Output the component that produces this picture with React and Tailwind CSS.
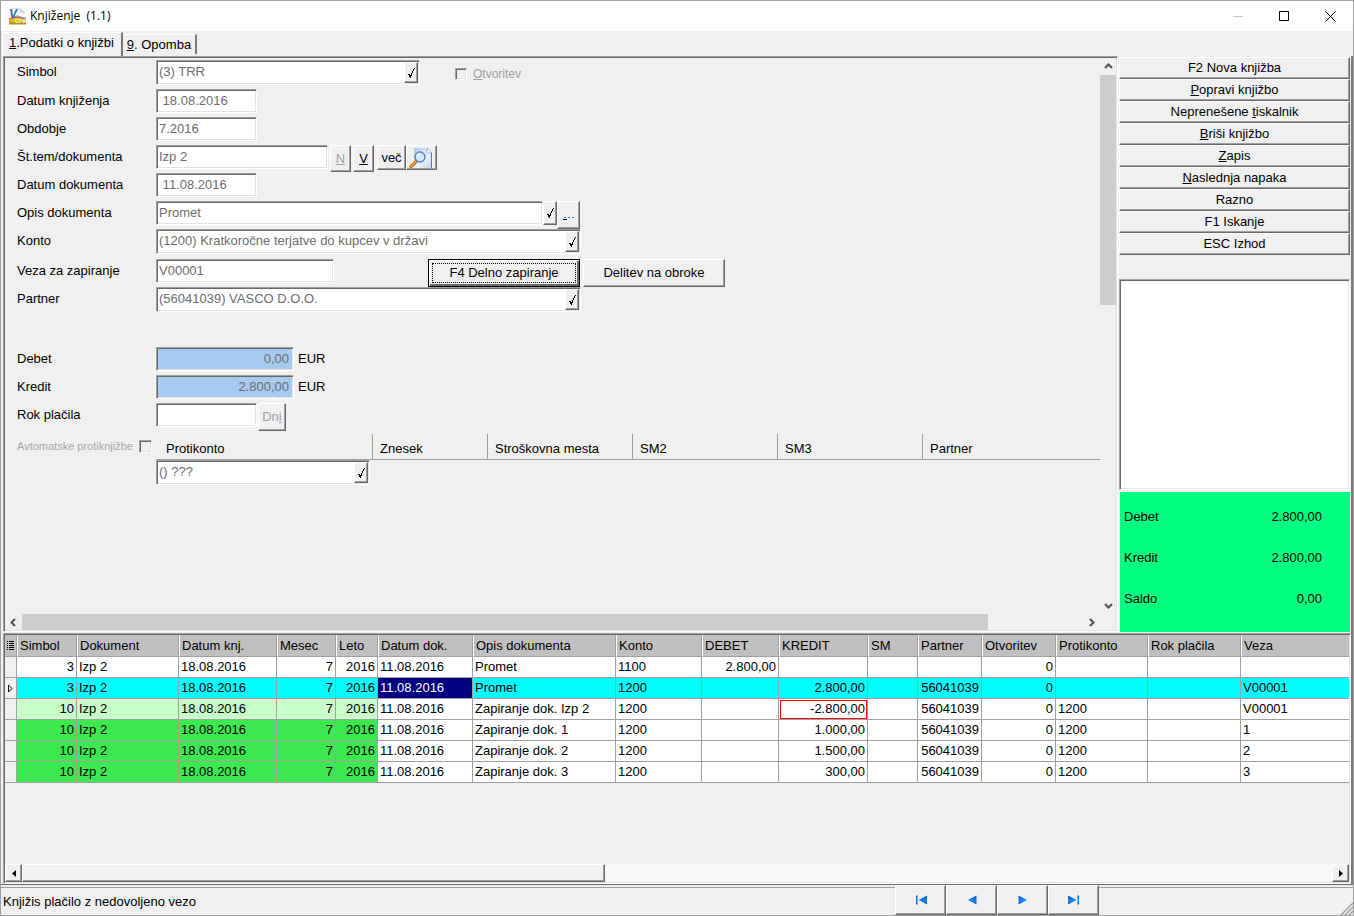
import clsx from 'clsx';

const sunken =
  'border border-t-[#a0a0a0] border-l-[#a0a0a0] border-r-white border-b-white shadow-[inset_1px_1px_#696969,inset_-1px_-1px_#e3e3e3]';
const raised =
  'border border-t-white border-l-white border-r-[#696969] border-b-[#696969] shadow-[inset_-1px_-1px_#a0a0a0] bg-[#f0f0f0]';

const actions = [
  ['F2 Nova knjižba', ''],
  ['', 'P', 'opravi knjižbo'],
  ['Neprenešene ', 't', 'iskalnik'],
  ['', 'B', 'riši knjižbo'],
  ['', 'Z', 'apis'],
  ['', 'N', 'aslednja napaka'],
  ['Razno', ''],
  ['F1 Iskanje', ''],
  ['ESC Izhod', ''],
];

const totals = [
  ['Debet', '2.800,00'],
  ['Kredit', '2.800,00'],
  ['Saldo', '0,00'],
];

const columns = [
  { title: 'Simbol', width: 'w-[60px]', right: true },
  { title: 'Dokument', width: 'w-[102px]' },
  { title: 'Datum knj.', width: 'w-[98px]' },
  { title: 'Mesec', width: 'w-[59px]', right: true },
  { title: 'Leto', width: 'w-[42px]', right: true },
  { title: 'Datum dok.', width: 'w-[95px]' },
  { title: 'Opis dokumenta', width: 'w-[143px]' },
  { title: 'Konto', width: 'w-[86px]' },
  { title: 'DEBET', width: 'w-[77px]', right: true },
  { title: 'KREDIT', width: 'w-[89px]', right: true },
  { title: 'SM', width: 'w-[50px]' },
  { title: 'Partner', width: 'w-[64px]', right: true },
  { title: 'Otvoritev', width: 'w-[74px]', right: true },
  { title: 'Protikonto', width: 'w-[92px]' },
  { title: 'Rok plačila', width: 'w-[93px]' },
  { title: 'Veza', width: '' },
];

const rows = [
  { kind: 'plain', cells: ['3', 'Izp 2', '18.08.2016', '7', '2016', '11.08.2016', 'Promet', '1100', '2.800,00', '', '', '', '0', '', '', ''] },
  { kind: 'current', cells: ['3', 'Izp 2', '18.08.2016', '7', '2016', '11.08.2016', 'Promet', '1200', '', '2.800,00', '', '56041039', '0', '', '', 'V00001'] },
  { kind: 'light', cells: ['10', 'Izp 2', '18.08.2016', '7', '2016', '11.08.2016', 'Zapiranje dok. Izp 2', '1200', '', '-2.800,00', '', '56041039', '0', '1200', '', 'V00001'] },
  { kind: 'green', cells: ['10', 'Izp 2', '18.08.2016', '7', '2016', '11.08.2016', 'Zapiranje dok. 1', '1200', '', '1.000,00', '', '56041039', '0', '1200', '', '1'] },
  { kind: 'green', cells: ['10', 'Izp 2', '18.08.2016', '7', '2016', '11.08.2016', 'Zapiranje dok. 2', '1200', '', '1.500,00', '', '56041039', '0', '1200', '', '2'] },
  { kind: 'green', cells: ['10', 'Izp 2', '18.08.2016', '7', '2016', '11.08.2016', 'Zapiranje dok. 3', '1200', '', '300,00', '', '56041039', '0', '1200', '', '3'] },
];

function cellColor(kind, index) {
  if (kind === 'current') return index === 5 ? 'bg-[#000080] text-white' : 'bg-[#00ffff]';
  if (kind === 'light' && index < 5) return 'bg-[#c8ffc8]';
  if (kind === 'green' && index < 5) return 'bg-[#3ce850]';
  return 'bg-white';
}

function AppIcon() {
  return (
    <svg className="w-[17px] h-[17px]" viewBox="0 0 17 17">
      <path d="M3 .5h8.500l3.500 4V12H3z" fill="#fbfbfb" stroke="#d0d0d0" strokeWidth=".6" />
      <path d="M11.500 .5v4H15z" fill="#dcdcdc" stroke="#b5b5b5" strokeWidth=".5" />
      <text x="0" y="9.500" fontSize="12" fontWeight="700" fontStyle="italic" fill="#1273b8">V</text>
      <path d="M0 10.500c4 .5 5-1.500 8-1.500s5 2.500 9 2V16H0z" fill="#dcb92c" />
      <path d="M0 10.500c4 .5 5-1.500 8-1.500s5 2.500 9 2" fill="none" stroke="#d94a35" strokeWidth="1" />
      <path d="M3 9.300c3 0 3-1.300 5.500-1.300s4 2 8 2" fill="none" stroke="#3d5fb0" strokeWidth=".7" />
      <path d="M0 14h17v2.500H0z" fill="#b9951b" />
      <text x="6" y="15" fontSize="5" fontWeight="700" fill="#fff8d0">GFW</text>
    </svg>
  );
}

function LookupIcon() {
  return (
    <svg className="w-[25px] h-5" viewBox="0 0 25 20">
      <defs>
        <linearGradient id="sheet" x1="0" y1="0" x2="1" y2="1">
          <stop offset="0" stopColor="#a9c4ee" />
          <stop offset=".55" stopColor="#eef4fd" />
          <stop offset="1" stopColor="#bdd0f0" />
        </linearGradient>
      </defs>
      <path d="M5 0h13l5 5v15H5z" fill="url(#sheet)" />
      <path d="M18 0v5h5z" fill="#fff" stroke="#8ea6d4" strokeWidth=".8" />
      <path d="M22.500 5v15" stroke="#5b74ad" strokeWidth="1" />
      <path d="M7 13.500L2 18.500" stroke="#c56a10" strokeWidth="3.200" strokeLinecap="round" />
      <path d="M6.500 13.500L2 18" stroke="#f7a23a" strokeWidth="1.600" strokeLinecap="round" />
      <circle cx="11" cy="9" r="5" fill="#cdeafb" stroke="#5d7fc0" strokeWidth="1.500" />
      <path d="M8 8a3.500 3.500 0 013-2.500" fill="none" stroke="#fff" strokeWidth="1.300" />
    </svg>
  );
}

function Chevron({ d }) {
  return (
    <svg className="w-[9px] h-[9px]" viewBox="0 0 9 9" fill="none" stroke="#505050" strokeWidth="2">
      <path d={d} />
    </svg>
  );
}

function TickButton({ label }) {
  return (
    <button aria-label={label} className={clsx(raised, 'w-[14px] self-stretch shrink-0 flex items-center justify-center')}>
      <svg className="w-[7px] h-[10px] shrink-0" viewBox="0 0 7 10" fill="none" stroke="#000" shapeRendering="crispEdges">
        <path d="M.5 6v1M1.500 6v3M2.500 7v3M3.500 5v3M4.500 3v2M5.500 1v2M6.500 0v1" />
      </svg>
    </button>
  );
}

function Field({ id, value, className }) {
  return <input id={id} defaultValue={value} className={clsx(sunken, 'h-6 px-0.5 pb-px bg-white text-[#6d6d6d] outline-none', className)} />;
}

function Combo({ id, value, className }) {
  return (
    <div className={clsx(sunken, 'h-[25px] p-px flex bg-white', className)}>
      <input id={id} defaultValue={value} className="flex-1 min-w-0 px-px pb-0.5 text-[#6d6d6d] outline-none" />
      <TickButton label="Izberi" />
    </div>
  );
}

function Row({ id, label, className, children }) {
  return (
    <div className={clsx('flex h-7 items-start', className)}>
      <label htmlFor={id} className="w-35 shrink-0 pl-px leading-[23px]">
        {label}
      </label>
      {children}
    </div>
  );
}

function Amount({ id, label, value, className }) {
  return (
    <Row id={id} label={label} className={className}>
      <input id={id} defaultValue={value} className={clsx(sunken, 'h-6 w-[138px] pr-1 pb-px bg-[#a6caf0] text-right text-[#6d6d6d] outline-none')} />
      <span className="pl-1 leading-[23px]">EUR</span>
    </Row>
  );
}

function EntryForm() {
  return (
    <form className="flex-1 min-w-0 overflow-hidden pt-0.5 pl-[11px]" onSubmit={(e) => e.preventDefault()}>
      <Row id="simbol" label="Simbol" className="mb-px">
        <Combo id="simbol" value="(3) TRR" className="w-[264px]" />
        <label className="ml-[35px] flex h-[27px] items-center gap-1.5 text-xs text-[#a0a0a0]">
          <input type="checkbox" className={clsx(sunken, 'appearance-none w-3 h-3')} />
          <span><u>O</u>tvoritev</span>
        </label>
      </Row>
      <Row id="datumKnj" label="Datum knjiženja">
        <Field id="datumKnj" value=" 18.08.2016" className="w-[101px]" />
      </Row>
      <Row id="obdobje" label="Obdobje">
        <Field id="obdobje" value="7.2016" className="w-[101px]" />
      </Row>
      <Row id="stevilka" label="Št.tem/dokumenta">
        <Field id="stevilka" value="Izp 2" className="w-[172px]" />
        <button className={clsx(raised, 'ml-0.5 w-[21px] h-[27px] text-[#a0a0a0] underline')}>N</button>
        <button className={clsx(raised, 'ml-0.5 w-[21px] h-[27px] underline')}>V</button>
        <button className={clsx(raised, 'ml-[3px] w-[29px] h-[25px] flex items-center justify-center')}>več</button>
        <button aria-label="Pregled dokumenta" className={clsx(raised, 'w-[31px] h-[25px] flex items-center justify-center')}>
          <LookupIcon />
        </button>
      </Row>
      <Row id="datumDok" label="Datum dokumenta">
        <Field id="datumDok" value=" 11.08.2016" className="w-[101px]" />
      </Row>
      <Row id="opis" label="Opis dokumenta">
        <Field id="opis" value="Promet" className="w-[387px]" />
        <div className="flex h-6"><TickButton label="Izberi" /></div>
        <button aria-label="Več možnosti" className={clsx(raised, 'w-[23px] h-7 flex items-center justify-center')}>
          <svg className="w-3 h-1 mt-2" viewBox="0 0 12 4" shapeRendering="crispEdges">
            <path d="M0 2.500h4" stroke="#000" />
            <path d="M1 .5h2M5 .5h2M9 .5h2" stroke="#2f7fc0" />
          </svg>
        </button>
      </Row>
      <Row id="konto" label="Konto" className="mb-0.5">
        <Combo id="konto" value="(1200) Kratkoročne terjatve do kupcev v državi" className="w-[425px]" />
      </Row>
      <Row id="veza" label="Veza za zapiranje">
        <Field id="veza" value="V00001" className="w-[178px]" />
        <button className="ml-[94px] w-[152px] h-7 border border-black bg-[#f0f0f0] p-[3px] shadow-[inset_1px_1px_#fff,inset_-2px_-2px_#696969]">
          <span className="flex h-full items-center justify-center border border-dotted border-black">F4 Delno zapiranje</span>
        </button>
        <button className={clsx(raised, 'ml-[3px] w-[142px] h-7')}>Delitev na obroke</button>
      </Row>
      <Row id="partner" label="Partner" className="mb-8">
        <Combo id="partner" value="(56041039) VASCO D.O.O." className="w-[425px]" />
      </Row>
      <Amount id="debet" label="Debet" value="0,00" />
      <Amount id="kredit" label="Kredit" value="2.800,00" />
      <Row id="rok" label="Rok plačila">
        <Field id="rok" value="" className="w-[101px]" />
        <button className={clsx(raised, 'ml-px w-7 h-7 text-[#a0a0a0]')}>
          Dn<u>i</u>
        </button>
      </Row>
      <div className="flex items-start pt-[3px]">
        <label className="w-35 shrink-0 h-6 flex items-center justify-between pl-px pr-1 text-[11px] text-[#a8a8a8] whitespace-nowrap">
          Avtomatske protiknjižbe
          <input type="checkbox" className={clsx(sunken, 'appearance-none w-[13px] h-[13px]')} />
        </label>
        <table className="flex-1 table-fixed border-separate border-spacing-0 w-full">
          <thead>
            <tr className="h-[26px] text-left">
              {[
                ['Protikonto', 'w-[217px] pl-2.5'],
                ['Znesek', 'w-[115px] pl-[7px]'],
                ['Stroškovna mesta', 'w-[145px] pl-[7px]'],
                ['SM2', 'w-[145px] pl-[7px]'],
                ['SM3', 'w-[145px] pl-[7px]'],
                ['Partner', 'pl-[7px]'],
              ].map(([title, cls]) => (
                <th key={title} className={clsx('font-normal pt-1 border-b border-r border-[#a0a0a0] last:border-r-0', cls)}>
                  {title}
                </th>
              ))}
            </tr>
          </thead>
          <tbody>
            <tr>
              <td colSpan={6}>
                <Combo id="protikonto" value="() ???" className="w-[214px]" />
              </td>
            </tr>
          </tbody>
        </table>
      </div>
    </form>
  );
}

function EntriesTable() {
  return (
    <table className="w-full table-fixed border-separate border-spacing-0">
      <thead>
        <tr className="h-[22px] bg-[#c0c0c0] text-left">
          <th className="w-3 p-0 border-r border-b border-[#a0a0a0]">
            <svg className="w-[7px] h-[9px] ml-0.5" viewBox="0 0 7 9" stroke="#000" shapeRendering="crispEdges">
              <path d="M0 .5h1M2 .5h5M0 2.500h1M2 2.500h5M0 4.500h1M2 4.500h5M0 6.500h1M2 6.500h5M0 8.500h1M2 8.500h5" />
            </svg>
          </th>
          {columns.map((col) => (
            <th
              key={col.title}
              className={clsx('font-normal py-0 px-0.5 border-l border-r border-b border-l-white border-r-[#a0a0a0] border-b-[#a0a0a0] last:border-r-0', col.width)}
            >
              {col.title}
            </th>
          ))}
        </tr>
      </thead>
      <tbody>
        {rows.map((row, r) => (
          <tr key={r} className="h-[21px]">
            <td className="p-0 border-r border-b border-[#a0a0a0] bg-[#f0f0f0]">
              {row.kind === 'current' && (
                <svg className="w-[5px] h-[9px] ml-[3px]" viewBox="0 0 5 9" fill="none" stroke="#000">
                  <path d="M.5 1v7L4 4.500z" />
                </svg>
              )}
            </td>
            {row.cells.map((cell, i) => (
              <td
                key={i}
                className={clsx(
                  'py-0 px-0.5 border-r border-b border-[#a0a0a0] last:border-r-0 whitespace-nowrap',
                  columns[i].right && 'text-right',
                  cellColor(row.kind, i),
                  row.kind === 'light' && i === 9 && 'outline outline-[#ff0000] -outline-offset-2',
                )}
              >
                {cell}
              </td>
            ))}
          </tr>
        ))}
      </tbody>
    </table>
  );
}

function NavIcon({ children }) {
  return (
    <svg className="w-3 h-[10px]" viewBox="0 0 12 10">
      <defs>
        <linearGradient id="nav" x1="0" y1="0" x2="0" y2="1">
          <stop offset="0" stopColor="#0a52c4" />
          <stop offset=".6" stopColor="#1c86f2" />
          <stop offset="1" stopColor="#0a52c4" />
        </linearGradient>
      </defs>
      <g fill="url(#nav)">{children}</g>
    </svg>
  );
}

const nav = [
  ['Prvi', <><path d="M1 .5h1.500v9H1z" /><path d="M12 .5v9L3.500 5z" /></>],
  ['Prejšnji', <path d="M10.500 .5v9L2 5z" />],
  ['Naslednji', <path d="M1.500 .5v9L10 5z" />],
  ['Zadnji', <><path d="M0 .5v9L8.500 5z" /><path d="M9.500 .5H11v9H9.500z" /></>],
];

export default function App() {
  return (
    <div className="h-screen flex flex-col overflow-hidden border border-[#a0a0a0] bg-[#f0f0f0] font-['Liberation_Sans',Arial,sans-serif] text-[13px] leading-4 text-black">
      <header className="h-[30px] shrink-0 flex items-center bg-white pl-2">
        <AppIcon />
        <h1 className="pl-1 text-xs font-['Open_Sans','Noto_Sans',sans-serif] whitespace-pre">Knjiženje  (1.1)</h1>
        <div className="ml-auto flex">
          <button aria-label="Pomanjšaj" className="w-[46px] h-7 flex items-center justify-center">
            <svg className="w-[11px] h-[11px]" viewBox="0 0 11 11" stroke="#c8c8c8"><path d="M0 5.500h10" /></svg>
          </button>
          <button aria-label="Povečaj" className="w-[46px] h-7 flex items-center justify-center">
            <svg className="w-[11px] h-[11px]" viewBox="0 0 11 11" fill="none" stroke="#000"><path d="M.5 .5h9v9h-9z" /></svg>
          </button>
          <button aria-label="Zapri" className="w-[46px] h-7 flex items-center justify-center">
            <svg className="w-[11px] h-[11px]" viewBox="0 0 11 11" fill="none" stroke="#000"><path d="M.5 .5l10 10M10.500 .5l-10 10" /></svg>
          </button>
        </div>
      </header>

      <nav className="h-[25px] shrink-0 flex items-start pl-px">
        <button className="h-6 mt-px pl-1.5 pr-[7px] pb-1 border-t border-l border-white border-r-2 border-r-[#7a7a7a]">
          <u>1</u>.Podatki o knjižbi
        </button>
        <button className="h-5 mt-[3px] px-1 border-t border-white border-r-2 border-r-[#7a7a7a] whitespace-pre">
          <u>9</u>. Opomba
        </button>
      </nav>

      <div className="flex-1 min-h-0 flex flex-col gap-px ml-0.5 border-r-2 border-[#7a7a7a]">
        <main className="flex-[576] min-h-0 flex">
          <section className={clsx(sunken, 'flex-1 min-w-0 p-px flex flex-col')}>
            <div className="flex-1 min-h-0 flex">
              <EntryForm />
              <div className="w-4 shrink-0 flex flex-col items-center">
                <div className="h-[17px] flex items-center"><Chevron d="M1 6l3.500-3.500L8 6" /></div>
                <div className="w-full flex-1 min-h-0">
                  <div className="h-[44%] bg-[#cdcdcd]" />
                </div>
                <div className="h-[17px] flex items-center"><Chevron d="M1 3l3.500 3.500L8 3" /></div>
              </div>
            </div>
            <div className="h-4 shrink-0 flex items-center pr-4">
              <div className="w-[17px] flex justify-center"><Chevron d="M6 1L2.500 4.500L6 8" /></div>
              <div className="flex-1 h-full">
                <div className="h-full w-[91%] bg-[#cdcdcd]" />
              </div>
              <div className="w-[17px] flex justify-center"><Chevron d="M3 1l3.500 3.500L3 8" /></div>
            </div>
          </section>

          <aside className="w-[233px] shrink-0 flex flex-col pt-px px-px">
            {actions.map(([before, key, after]) => (
              <button key={before + key} className={clsx(raised, 'h-[22px] shrink-0')}>
                {before}
                {key && <u>{key}</u>}
                {after}
              </button>
            ))}
            <div className={clsx(sunken, 'mt-6 flex-1 min-h-0 bg-white')} />
            <dl className="mt-0.5 ml-px h-[140px] shrink-0 pt-[17px] pl-1 pr-7 flex flex-col gap-[25px] bg-[#00ff80]">
              {totals.map(([name, value]) => (
                <div key={name} className="flex justify-between">
                  <dt>{name}</dt>
                  <dd>{value}</dd>
                </div>
              ))}
            </dl>
          </aside>
        </main>

        <section className={clsx(sunken, 'flex-[247] min-h-0 p-px flex flex-col')}>
          <div className="flex-1 min-h-0 overflow-hidden">
            <EntriesTable />
          </div>
          <div className="h-[18px] shrink-0 flex bg-[#f8f8f8]">
            <button aria-label="Pomik levo" className={clsx(raised, 'w-[17px] flex items-center justify-center')}>
              <svg className="w-1 h-[7px]" viewBox="0 0 4 7"><path d="M4 0v7L0 3.500z" /></svg>
            </button>
            <div className="flex-1">
              <div className={clsx(raised, 'h-full w-[44.500%]')} />
            </div>
            <button aria-label="Pomik desno" className={clsx(raised, 'w-[17px] flex items-center justify-center')}>
              <svg className="w-1 h-[7px]" viewBox="0 0 4 7"><path d="M0 0v7l4-3.500z" /></svg>
            </button>
          </div>
        </section>
      </div>

      <footer className="h-[31px] shrink-0 flex border-t border-[#696969]">
        <div className="flex-1 mt-0.5 border-t border-[#a0a0a0] pl-0.5 flex items-center">Knjižis plačilo z nedovoljeno vezo</div>
        {nav.map(([label, shape]) => (
          <button key={label} aria-label={label} className={clsx(raised, 'w-[51px] flex items-center justify-center')}>
            <NavIcon>{shape}</NavIcon>
          </button>
        ))}
        <div className="w-[254px] mt-0.5 border-t border-[#a0a0a0] flex items-end justify-end">
          <svg className="w-[13px] h-[13px]" viewBox="0 0 13 13" stroke="#a0a0a0" strokeWidth="1.500">
            <path d="M1 13L13 1M5 13l8-8M9 13l4-4" />
          </svg>
        </div>
      </footer>
    </div>
  );
}
